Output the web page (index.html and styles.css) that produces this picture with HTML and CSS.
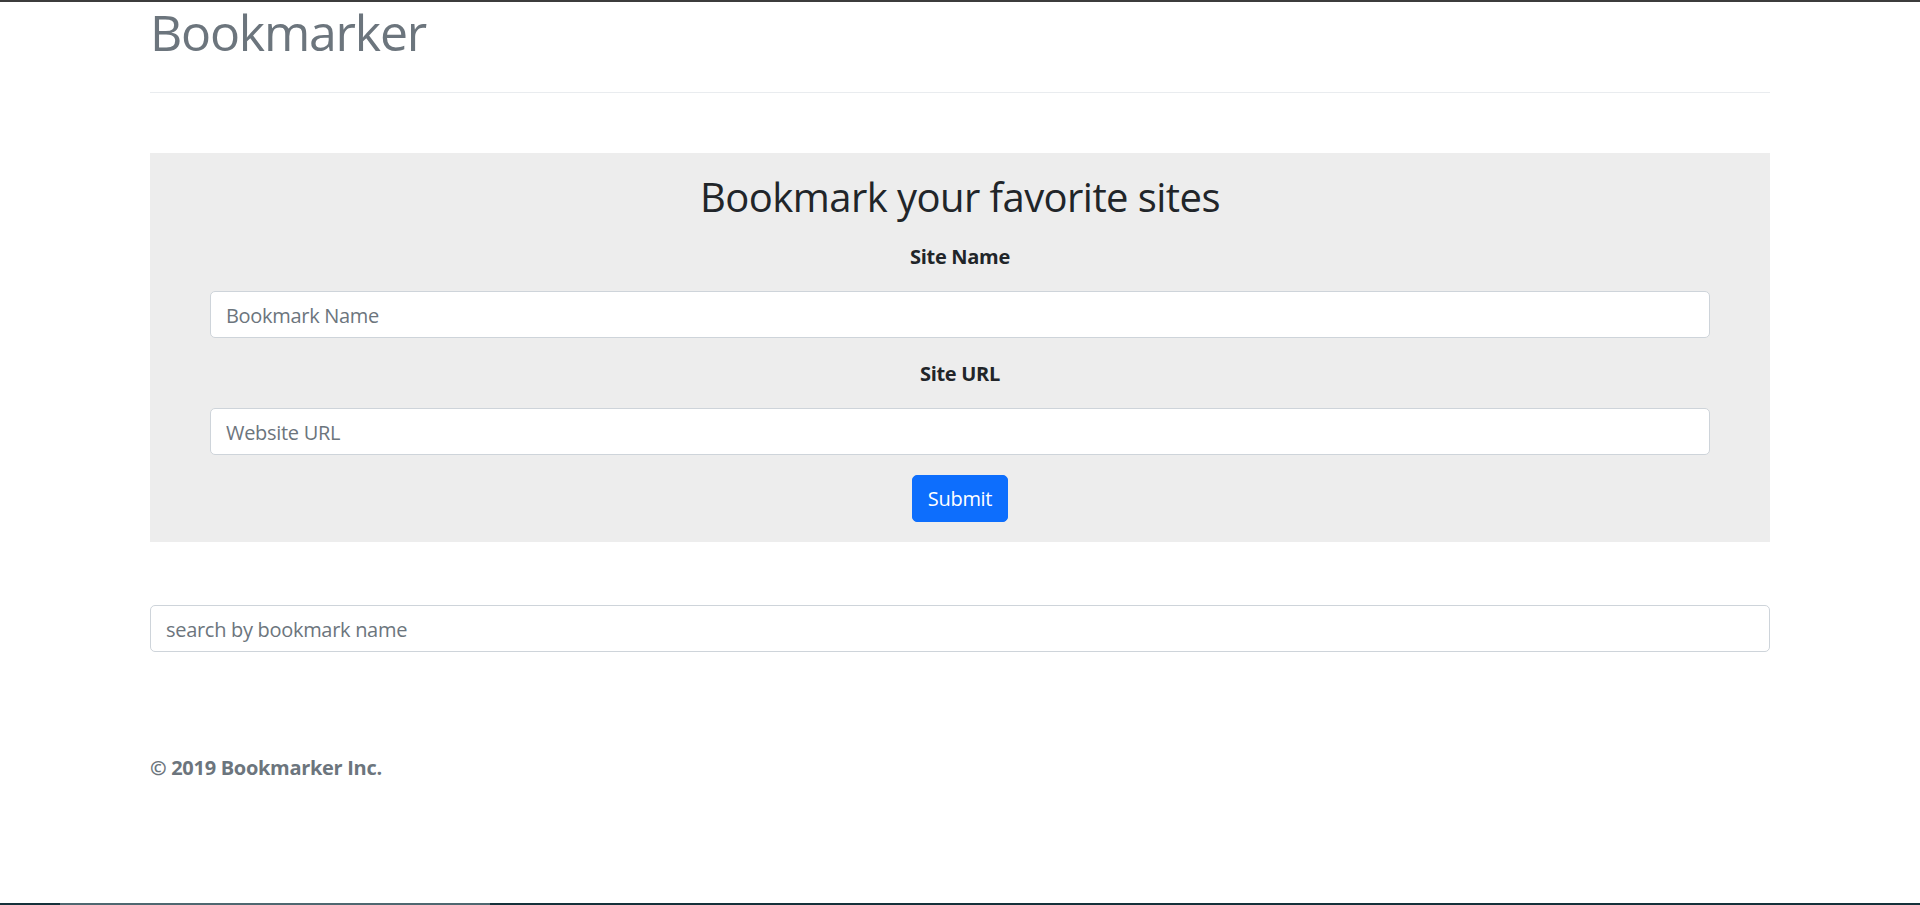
FILE: index.html
```html
<!DOCTYPE html>
<html lang="en">
<head>
<meta charset="utf-8">
<title>Bookmarker</title>
<link rel="stylesheet" href="styles.css">
</head>
<body>
  <div class="topbar"></div>
  <div class="container">
    <header class="masthead">
      <h1 class="brand">Bookmarker</h1>
    </header>

    <section class="jumbo">
      <h2 class="jumbo-title">Bookmark your favorite sites</h2>
      <form class="bm-form">
        <label class="bm-label" for="siteName">Site Name</label>
        <input class="field" id="siteName" type="text" placeholder="Bookmark Name">
        <label class="bm-label" for="siteUrl">Site URL</label>
        <input class="field" id="siteUrl" type="text" placeholder="Website URL">
        <button class="btn-submit" type="button">Submit</button>
      </form>
    </section>

    <input class="field search" type="text" placeholder="search by bookmark name">

    <footer class="site-footer">&copy; 2019 Bookmarker Inc.</footer>
  </div>
  <div class="taskbar"><span class="tb-seg"></span></div>
</body>
</html>
```

FILE: styles.css
```css
* {
  box-sizing: border-box;
}

html, body {
  margin: 0;
  padding: 0;
}

body {
  min-height: 100vh;
  display: flex;
  flex-direction: column;
  background: #ffffff;
  color: #212529;
  font-family: "Open Sans", "Noto Sans", "Liberation Sans", sans-serif;
  font-size: 20px;
  line-height: 30px;
  letter-spacing: -0.015em;
}

.topbar {
  height: 2px;
  background: #3c3c3c;
  flex: none;
}

.container {
  width: 1620px;
  margin: 0 auto;
  flex: 1 0 auto;
}

.masthead {
  padding-bottom: 30px;
  border-bottom: 1px solid #e9ecef;
  margin-bottom: 60px;
}

.brand {
  margin: 0;
  font-size: 50px;
  line-height: 60px;
  font-weight: 500;
  letter-spacing: -0.024em;
  color: #6c757d;
}

.jumbo {
  background: #ededed;
  padding: 20px 60px;
  display: flex;
  flex-direction: column;
  gap: 20px;
}

.jumbo-title {
  margin: 0;
  text-align: center;
  font-size: 40px;
  line-height: 48px;
  font-weight: 500;
  letter-spacing: -0.014em;
  color: #212529;
}

.bm-form {
  display: flex;
  flex-direction: column;
  gap: 20px;
}

.bm-label {
  display: block;
  height: 30px;
  padding-top: 1px;
  line-height: 29px;
  text-align: center;
  font-weight: 700;
  color: #212529;
}

.field {
  display: block;
  width: 100%;
  height: 47px;
  padding: 8px 15px 7px;
  font-family: inherit;
  font-size: 20px;
  line-height: 30px;
  letter-spacing: -0.015em;
  color: #212529;
  background: #ffffff;
  border: 1px solid #ced4da;
  border-radius: 5px;
  outline: none;
}

.field::placeholder {
  color: #6c757d;
  opacity: 1;
}

.btn-submit {
  align-self: center;
  height: 47px;
  padding: 8px 15px 7px;
  font-family: inherit;
  font-size: 20px;
  line-height: 30px;
  letter-spacing: -0.015em;
  color: #ffffff;
  background: #0d6efd;
  border: 1px solid #0d6efd;
  border-radius: 5px;
  cursor: pointer;
}

.search {
  margin-top: 63px;
}

.site-footer {
  margin-top: 101px;
  font-weight: 700;
  color: #6c757d;
}

.taskbar {
  height: 2px;
  background: #15313a;
  flex: none;
  display: flex;
}

.tb-seg {
  margin-left: 60px;
  width: 430px;
  background: #4f6770;
}
```
